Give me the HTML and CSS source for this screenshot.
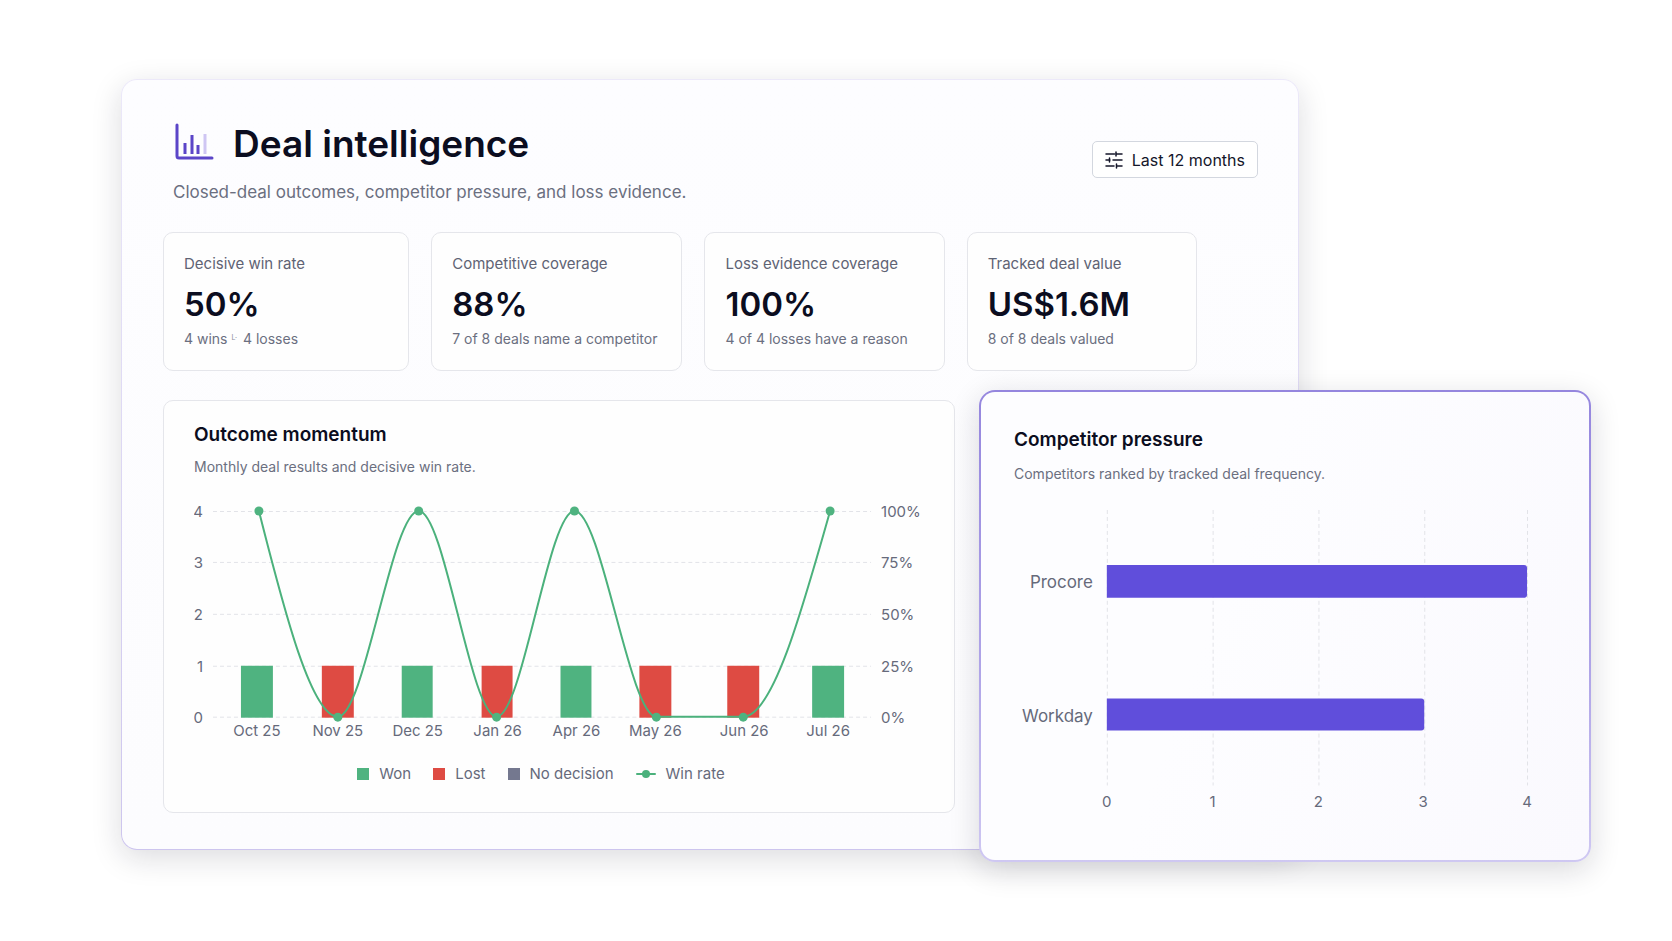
FILE: index.html
```
<!DOCTYPE html>
<html lang="en">
<head>
  <meta charset="UTF-8">
  <meta name="viewport" content="width=device-width, initial-scale=1">
  <title>Deal intelligence</title>
  <link rel="stylesheet" href="styles.css">
</head>
<body>
  <main class="stage">
    <section class="panel">
      <header class="panel-header">
        <div>
          <div class="title-row">
            <svg class="title-icon" width="40" height="40" viewBox="0 0 40 40" fill="none" stroke="#5b45c8" stroke-width="3" stroke-linecap="round" stroke-linejoin="round" aria-hidden="true">
              <path d="M3 4v31a2 2 0 0 0 2 2h33"/>
              <path d="M11 22v11M18 14v19M24 24v9" stroke-linecap="butt"/>
              <path d="M31 13v20" stroke="#cfc6f3" stroke-linecap="butt"/>
            </svg>
            <h1>Deal intelligence</h1>
          </div>
          <p class="lead">Closed-deal outcomes, competitor pressure, and loss evidence.</p>
        </div>
        <button class="range-button" type="button">
          <svg width="18" height="18" viewBox="0 0 18 18" fill="none" stroke="currentColor" stroke-width="1.5" stroke-linecap="round" aria-hidden="true">
            <path d="M1 3h8.500M11 1v4M11 3h6M1 9h4M4.500 7v4M8 9h9M1 15h8M11.500 13v4M11.500 15H17"/>
          </svg>
          Last 12 months
        </button>
      </header>

      <div class="stats">
        <article class="stat">
          <h2>Decisive win rate</h2>
          <strong>50%</strong>
          <p>4 wins <span class="sep">L·</span> 4 losses</p>
        </article>
        <article class="stat">
          <h2>Competitive coverage</h2>
          <strong>88%</strong>
          <p>7 of 8 deals name a competitor</p>
        </article>
        <article class="stat">
          <h2>Loss evidence coverage</h2>
          <strong>100%</strong>
          <p>4 of 4 losses have a reason</p>
        </article>
        <article class="stat">
          <h2>Tracked deal value</h2>
          <strong>US$1.6M</strong>
          <p>8 of 8 deals valued</p>
        </article>
      </div>

      <article class="momentum">
        <h2 class="card-title">Outcome momentum</h2>
        <p class="card-text">Monthly deal results and decisive win rate.</p>
        <svg class="chart" viewBox="0 0 731 245" role="img" aria-label="Monthly deal results and win rate">
          <g class="grid">
            <path d="M19 12.500H678M19 63.500H678M19 115.500H678M19 167.500H678M19 218.500H678"/>
          </g>
          <g class="axis axis-end">
            <text x="9" y="18">4</text>
            <text x="9" y="69">3</text>
            <text x="9" y="121">2</text>
            <text x="9" y="173">1</text>
            <text x="9" y="224">0</text>
          </g>
          <g class="axis">
            <text x="688" y="18">100%</text>
            <text x="688" y="69">75%</text>
            <text x="688" y="121">50%</text>
            <text x="688" y="173">25%</text>
            <text x="688" y="224">0%</text>
          </g>
          <g class="won">
            <rect x="47" y="167" width="32" height="52"/>
            <rect x="208" y="167" width="31" height="52"/>
            <rect x="367" y="167" width="31" height="52"/>
            <rect x="619" y="167" width="32" height="52"/>
          </g>
          <g class="lost">
            <rect x="128" y="167" width="32" height="52"/>
            <rect x="288" y="167" width="31" height="52"/>
            <rect x="446" y="167" width="32" height="52"/>
            <rect x="534" y="167" width="32" height="52"/>
          </g>
          <path class="rate-line" d="M65 12C91 115 118 218 144 218C171 218 198 12 225 12C251 12 277 218 303 218C329 218 355 12 381 12C408 12 436 218 463 218H550C579 218 608 115 637 12"/>
          <g class="won">
            <circle cx="65" cy="12" r="4.500"/>
            <circle cx="144" cy="218.500" r="4.500"/>
            <circle cx="225" cy="12" r="4.500"/>
            <circle cx="303" cy="218.500" r="4.500"/>
            <circle cx="381" cy="12" r="4.500"/>
            <circle cx="463" cy="218.500" r="4.500"/>
            <circle cx="550" cy="218.500" r="4.500"/>
            <circle cx="637" cy="12" r="4.500"/>
          </g>
          <g class="axis axis-middle">
            <text x="63" y="237">Oct 25</text>
            <text x="144" y="237">Nov 25</text>
            <text x="224" y="237">Dec 25</text>
            <text x="304" y="237">Jan 26</text>
            <text x="383" y="237">Apr 26</text>
            <text x="462" y="237">May 26</text>
            <text x="551" y="237">Jun 26</text>
            <text x="635" y="237">Jul 26</text>
          </g>
        </svg>
        <ul class="legend">
          <li><span class="swatch swatch-won"></span>Won</li>
          <li><span class="swatch swatch-lost"></span>Lost</li>
          <li><span class="swatch swatch-none"></span>No decision</li>
          <li>
            <svg width="20" height="10" viewBox="0 0 20 10" aria-hidden="true">
              <path d="M1 5h18" stroke="#4bb17c" stroke-width="2" stroke-linecap="round"/>
              <circle cx="10" cy="5" r="4" fill="#4bb17c"/>
            </svg>
            Win rate
          </li>
        </ul>
      </article>
    </section>

    <section class="pressure">
      <h2 class="card-title">Competitor pressure</h2>
      <p class="card-text">Competitors ranked by tracked deal frequency.</p>
      <svg class="chart" viewBox="0 0 543 315" role="img" aria-label="Competitors ranked by tracked deals">
        <g class="grid">
          <path d="M93.500 10V286M199.500 10V286M305.500 10V286M411.500 10V286M514.500 10V286"/>
        </g>
        <g class="deals">
          <path d="M93 65H511a3 3 0 0 1 3 3V95a3 3 0 0 1-3 3H93z"/>
          <path d="M93 199H408a3 3 0 0 1 3 3V228a3 3 0 0 1-3 3H93z"/>
        </g>
        <g class="names">
          <text x="79" y="88">Procore</text>
          <text x="79" y="222">Workday</text>
        </g>
        <g class="axis axis-middle">
          <text x="93" y="308">0</text>
          <text x="199" y="308">1</text>
          <text x="305" y="308">2</text>
          <text x="410" y="308">3</text>
          <text x="514" y="308">4</text>
        </g>
      </svg>
    </section>
  </main>
</body>
</html>
```
FILE: styles.css
```
* {
  box-sizing: border-box;
}
body {
  margin: 0;
  min-height: 100vh;
  background: #fff;
  color: #0b0d20;
  font-family: Inter, "Liberation Sans", sans-serif;
}
h1, h2, p, ul {
  margin: 0;
  padding: 0;
}

/* the pressure card shares the middle column with the panel */
.stage {
  display: grid;
  grid-template-columns: 858fr 320fr 292fr;
  align-items: start;
  padding: 79px 81px 80px 121px;
}
.panel {
  grid-area: 1 / 1 / 2 / 3;
  padding: 40px 40px 36px 41px;
  border: 1px solid transparent;
  border-radius: 16px;
  background:
    linear-gradient(#fdfdff, #fcfcfe) padding-box,
    linear-gradient(#ece9f9, #cdc5ee) border-box;
  box-shadow: 0 8px 30px rgba(20, 18, 40, 0.15);
}
.pressure {
  grid-area: 1 / 2 / 2 / 4;
  margin-top: 311px;
  padding: 36px 33px 46px;
  border: 2px solid transparent;
  border-radius: 16px;
  background:
    linear-gradient(110deg, #fdfdff 40%, #faf9fe) padding-box,
    linear-gradient(#9586de, #b0a5e8 60%, #cfc8f2) border-box;
  box-shadow: 0 8px 30px rgba(20, 18, 40, 0.16);
}

.panel-header {
  display: flex;
  justify-content: space-between;
  align-items: flex-start;
}
.title-row {
  display: flex;
  align-items: center;
  gap: 19px;
  padding-left: 11px;
}
h1 {
  font-size: 37px;
  font-weight: 600;
  line-height: 48px;
}
.title-icon {
  margin-bottom: 6px;
}
.lead {
  margin-top: 12px;
  padding-left: 10px;
  color: #6b6f80;
  font-size: 17px;
  line-height: 24px;
}
.range-button {
  display: flex;
  align-items: center;
  gap: 9px;
  margin-top: 21px;
  padding: 0 12px;
  height: 37px;
  border: 1px solid #d3d7df;
  border-radius: 5px;
  background: #fff;
  color: #14162a;
  font: 400 16px Inter, "Liberation Sans", sans-serif;
}

.stats {
  display: grid;
  grid-template-columns: 247fr 252fr 241fr 231fr;
  gap: 22px;
  margin: 28px 61px 0 0;
}
.stat {
  padding: 21px 20px;
  border: 1px solid #e5e6eb;
  border-radius: 10px;
  background: #fefefe;
  white-space: nowrap;
}
.stat h2 {
  color: #5f6374;
  font-size: 15px;
  font-weight: 400;
  line-height: 20px;
}
.stat strong {
  display: block;
  margin: 10px 0 5px;
  font-size: 33px;
  font-weight: 600;
  line-height: 40px;
}
.stat p {
  color: #6b6f80;
  font-size: 14px;
  line-height: 20px;
}
.sep {
  margin-right: 2px;
  color: #8a8d9c;
  font-size: 7px;
  line-height: 1;
  vertical-align: 4px;
}

.momentum {
  width: 792px;
  max-width: 100%;
  margin-top: 29px;
  padding: 22px 30px 26px;
  border: 1px solid #e5e6eb;
  border-radius: 10px;
  background: #fefefe;
}
.card-title {
  font-size: 19px;
  font-weight: 600;
  line-height: 24px;
}
.card-text {
  margin-top: 10px;
  color: #6b6f80;
  font-size: 14px;
  line-height: 20px;
}
.chart {
  display: block;
  width: 100%;
  height: auto;
  margin-top: 22px;
}
.pressure .card-text {
  margin-top: 12px;
}
.pressure .chart {
  margin-top: 16px;
}
.grid {
  fill: none;
  stroke: #e2e3e8;
  stroke-dasharray: 4 3;
}
.axis {
  fill: #666a7b;
  font-size: 15px;
}
.axis-end, .names {
  text-anchor: end;
}
.axis-middle {
  text-anchor: middle;
}
.names {
  fill: #666a7b;
  font-size: 17px;
}
.won {
  fill: #4fb380;
}
.lost {
  fill: #de4b43;
}
.deals {
  fill: #604edb;
}
.rate-line {
  fill: none;
  stroke: #4bb17c;
  stroke-width: 2;
}
.legend {
  display: flex;
  justify-content: center;
  gap: 22px;
  margin-top: 18px;
  padding-right: 36px;
  color: #666a7b;
  font-size: 15px;
  line-height: 24px;
  list-style: none;
}
.legend li {
  display: flex;
  align-items: center;
  gap: 10px;
}
.swatch {
  width: 12px;
  height: 12px;
}
.swatch-won {
  background: #4fb380;
}
.swatch-lost {
  background: #de4b43;
}
.swatch-none {
  background: #74788f;
}
```
